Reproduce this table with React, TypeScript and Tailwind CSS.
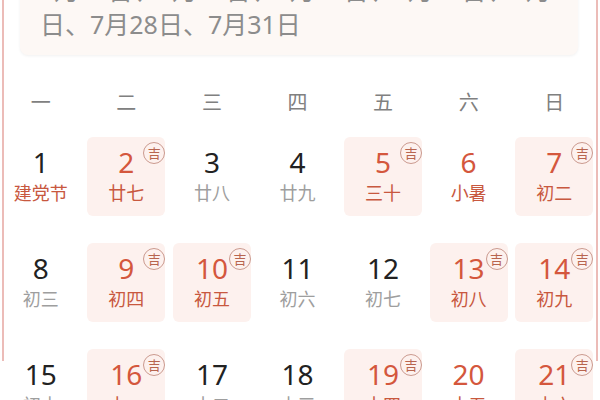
type Day = {
  n: number;
  lunar: string;
  lucky?: boolean;
  red?: boolean;
  redLunar?: boolean;
};

const weekdays = ["一", "二", "三", "四", "五", "六", "日"];

const weeks: Day[][] = [
  [
    { n: 1, lunar: "建党节", redLunar: true },
    { n: 2, lunar: "廿七", lucky: true },
    { n: 3, lunar: "廿八" },
    { n: 4, lunar: "廿九" },
    { n: 5, lunar: "三十", lucky: true },
    { n: 6, lunar: "小暑", red: true },
    { n: 7, lunar: "初二", lucky: true },
  ],
  [
    { n: 8, lunar: "初三" },
    { n: 9, lunar: "初四", lucky: true },
    { n: 10, lunar: "初五", lucky: true },
    { n: 11, lunar: "初六" },
    { n: 12, lunar: "初七" },
    { n: 13, lunar: "初八", lucky: true },
    { n: 14, lunar: "初九", lucky: true },
  ],
  [
    { n: 15, lunar: "初十" },
    { n: 16, lunar: "十一", lucky: true },
    { n: 17, lunar: "十二" },
    { n: 18, lunar: "十三" },
    { n: 19, lunar: "十四", lucky: true },
    { n: 20, lunar: "十五", red: true },
    { n: 21, lunar: "十六", lucky: true },
  ],
];

function DayCell({ day }: { day: Day }) {
  const red = day.lucky || day.red;
  return (
    <div className="h-[106px] flex justify-center">
      <div
        className={
          "relative w-[78px] h-[79px] rounded-[6px] flex flex-col items-center pt-[9px] " +
          (day.lucky ? "bg-[#fdf1ee]" : "")
        }
      >
        <div
          className={
            "text-[28px] leading-[32px] " + (red ? "text-[#d4573d]" : "text-[#222222]")
          }
        >
          {day.n}
        </div>
        <div
          className={
            "mt-[4px] text-[18px] leading-[22px] " +
            (red || day.redLunar ? "text-[#c8583f]" : "text-[#9e9e9e]")
          }
        >
          {day.lunar}
        </div>
        {day.lucky && (
          <div className="absolute top-[5px] right-0 w-[22px] h-[22px] rounded-full border border-[#cb9a8f] flex items-center justify-center text-[13px] leading-none text-[#b8654f]">
            吉
          </div>
        )}
      </div>
    </div>
  );
}

export default function App() {
  return (
    <div
      className="w-[600px] h-[400px] overflow-hidden bg-white"
      style={{ fontFamily: '"Noto Sans", "Noto Sans CJK SC", sans-serif' }}
    >
      <div className="ml-[2px] w-[596px] h-full border-x-2 border-[#ecbcb8]">
        {/* lucky days summary */}
        <div className="ml-[16px] w-[558px] -mt-[39px] pt-[12px] pb-[14px] px-[20px] rounded-[8px] bg-[#fdf8f5] shadow-[0_1px_3px_rgba(0,0,0,0.06)] text-[25px] leading-[34px] text-[#8c8c8c] whitespace-nowrap overflow-hidden">
          <div>7月19日、7月21日、7月23日、7月24日、7月26</div>
          <div>日、7月28日、7月31日</div>
        </div>

        {/* week header */}
        <div className="-ml-[6px] w-[599px] mt-[30px] grid grid-cols-7 h-[36px] text-[20px] leading-[36px] text-[#808080] text-center">
          {weekdays.map((w) => (
            <div key={w}>{w}</div>
          ))}
        </div>

        {/* days */}
        <div className="-ml-[6px] w-[599px] mt-[16px] grid grid-cols-7">
          {weeks.flat().map((d) => (
            <DayCell key={d.n} day={d} />
          ))}
        </div>
      </div>
    </div>
  );
}
